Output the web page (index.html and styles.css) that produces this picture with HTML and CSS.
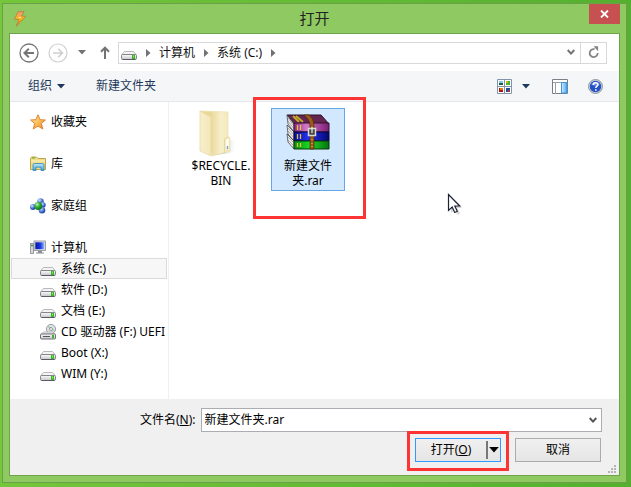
FILE: index.html
```html
<!DOCTYPE html>
<html lang="zh-CN">
<head>
<meta charset="utf-8">
<title>打开</title>
<link rel="stylesheet" href="styles.css">
</head>
<body>
<svg class="defs" aria-hidden="true">
  <defs>
    <linearGradient id="metal" x1="0" y1="0" x2="0" y2="1"><stop offset="0" stop-color="#fdfdfd"/><stop offset="1" stop-color="#c3c4c8"/></linearGradient>
    <linearGradient id="gold" x1="0" y1="0" x2="1" y2="1"><stop offset="0" stop-color="#fff3a0"/><stop offset="1" stop-color="#f08a1c"/></linearGradient>
    <linearGradient id="bolt" x1="0" y1="0" x2="0" y2="1"><stop offset="0" stop-color="#f39a7c"/><stop offset=".5" stop-color="#f6b51e"/><stop offset="1" stop-color="#ee8a12"/></linearGradient>
    <linearGradient id="screen" x1="0" y1="0" x2="1" y2="0"><stop offset="0" stop-color="#0a14a8"/><stop offset=".55" stop-color="#1a35dd"/><stop offset="1" stop-color="#8fb7ff"/></linearGradient>
    <linearGradient id="sky" x1="0" y1="0" x2="0" y2="1"><stop offset="0" stop-color="#bfe9fb"/><stop offset="1" stop-color="#3b9ed8"/></linearGradient>
    <linearGradient id="pane" x1="0" y1="0" x2="1" y2="0"><stop offset="0" stop-color="#d2ecff"/><stop offset="1" stop-color="#4aa6f3"/></linearGradient>
    <linearGradient id="flapA" x1="0" y1="0" x2="1" y2="0"><stop offset="0" stop-color="#f8efcb"/><stop offset="1" stop-color="#f3e6b8"/></linearGradient>
    <linearGradient id="flapB" x1="0" y1="0" x2="1" y2="0"><stop offset=".35" stop-color="#e9d798"/><stop offset=".7" stop-color="#f8efcb"/><stop offset="1" stop-color="#f3e6b8"/></linearGradient>
    <linearGradient id="shade" x1="0" y1="0" x2="1" y2="0"><stop offset=".3" stop-color="#aaa"/><stop offset="1" stop-color="#fff" stop-opacity="0"/></linearGradient>
    <linearGradient id="purple" x1="0" y1="0" x2="1" y2="0"><stop offset="0" stop-color="#8b2382"/><stop offset=".35" stop-color="#d27ac8"/><stop offset="1" stop-color="#7c1c74"/></linearGradient>
    <linearGradient id="blue" x1="0" y1="0" x2="1" y2="0"><stop offset="0" stop-color="#0a0a96"/><stop offset=".4" stop-color="#2433f2"/><stop offset="1" stop-color="#060670"/></linearGradient>
    <linearGradient id="green" x1="0" y1="0" x2="1" y2="0"><stop offset="0" stop-color="#0a8a14"/><stop offset=".45" stop-color="#17dd22"/><stop offset="1" stop-color="#077010"/></linearGradient>
    <radialGradient id="ball" cx=".35" cy=".3" r=".7"><stop offset="0" stop-color="#d7e6ff"/><stop offset=".5" stop-color="#5b84dc"/><stop offset="1" stop-color="#1e3fa4"/></radialGradient>
    <radialGradient id="ballGreen" cx=".35" cy=".3" r=".7"><stop offset="0" stop-color="#c2f3b4"/><stop offset=".5" stop-color="#2fae33"/><stop offset="1" stop-color="#0c7419"/></radialGradient>
  </defs>
  <symbol id="drive" viewBox="0 0 16 16">
    <path d="M3.500 6.500h9l2.600 3H.9z" fill="#f4f4f5" stroke="#a6a8ac" stroke-width=".8"/>
    <rect x=".5" y="9.500" width="15" height="5" rx="1.200" fill="url(#metal)" stroke="#84868c"/>
    <path d="M1.500 14.500h13" stroke="#5d5965"/>
    <rect x="11" y="10" width="3" height="4" fill="#36b526"/><rect x="12" y="10.500" width="1" height="2" fill="#8bea5b"/>
  </symbol>
  <symbol id="cd-drive" viewBox="0 0 16 16">
    <circle cx="11" cy="5" r="4.600" fill="#dfe2e5" stroke="#858a90" stroke-width=".8"/>
    <path d="M11 5 8 2.200M11 5l3.500 1.800" stroke="#9fcdb0" stroke-width="1.400"/><circle cx="11" cy="5" r="1.500" fill="#fff" stroke="#777" stroke-width=".7"/>
    <path d="M3.500 8h9l2.600 2H.9z" fill="#eee" stroke="#a6a8ac" stroke-width=".7"/>
    <rect x=".5" y="10" width="15" height="5" rx="1" fill="url(#metal)" stroke="#6f7177"/>
    <path d="M3 12.500h7" stroke="#555"/><rect x="12" y="11" width="2" height="3" fill="#36b526"/>
  </symbol>
  <symbol id="tri-right" viewBox="0 0 5 8"><path d="M0 0 4.500 4 0 8z" fill="currentColor"/></symbol>
  <symbol id="tri-down" viewBox="0 0 8 5"><path d="M0 0h8L4 4.500z" fill="currentColor"/></symbol>
  <symbol id="chevron" viewBox="0 0 8 7"><path d="M.7 1 4 4.600 7.300 1" fill="none" stroke="currentColor" stroke-width="2"/></symbol>
</svg>

<main class="dialog" aria-labelledby="title">
  <header class="titlebar">
    <svg class="app-icon" viewBox="0 0 14 16"><path d="M5 .8 11 .5 8.500 5l4.300.4L3.200 15.200 6 8.600 1.400 8.200z" fill="url(#bolt)" stroke="#b7743a" stroke-width=".7"/><path d="M5.500 6.700 8 6.300" stroke="#fff0a0"/></svg>
    <h1 id="title">打开</h1>
    <button class="close" aria-label="关闭"><svg width="9" height="8" viewBox="0 0 9 8"><path d="M1 .5 8 7.500M8 .5 1 7.500" stroke="#fff" stroke-width="1.800"/></svg></button>
  </header>

  <div class="client">
    <nav class="navrow">
      <button class="round" aria-label="后退"><svg width="20" height="20" viewBox="0 0 20 20" fill="none" stroke="#757575"><circle cx="10" cy="10" r="9" stroke-width="1.300"/><path d="M15 10H6M9.800 5.700 5.500 10l4.300 4.300" stroke-width="2"/></svg></button>
      <button class="round" aria-label="前进"><svg width="20" height="20" viewBox="0 0 20 20" fill="none" stroke="#cfcfcf"><circle cx="10" cy="10" r="9" stroke-width="1.200"/><path d="M5 10h9M10.200 5.700l4.300 4.300-4.300 4.300" stroke-width="1.600"/></svg></button>
      <button class="history" aria-label="最近位置"><svg width="8" height="5"><use href="#tri-down"/></svg></button>
      <button class="up" aria-label="上移"><svg width="10" height="13" viewBox="0 0 10 13" fill="none" stroke="#737373" stroke-width="2"><path d="M5 13V2M1 5.700l4-4 4 4"/></svg></button>
      <div class="address">
        <svg class="icon"><use href="#drive"/></svg>
        <svg class="sep" width="5" height="8"><use href="#tri-right"/></svg>
        <a href="#">计算机</a>
        <svg class="sep" width="5" height="8"><use href="#tri-right"/></svg>
        <a href="#">系统 (C:)</a>
        <svg class="sep" width="5" height="8"><use href="#tri-right"/></svg>
        <button class="drop" aria-label="以前的位置"><svg width="8" height="7"><use href="#chevron"/></svg></button>
        <button class="refresh" aria-label="刷新"><svg width="12" height="13" viewBox="0 0 12 13"><path d="M6.600 3.200A4 4 0 1 0 9.700 7" fill="none" stroke="#858585" stroke-width="1.800"/><path d="M5.500.3h4.600v5z" fill="#858585"/></svg></button>
      </div>
    </nav>

    <div class="toolbar">
      <button class="organize">组织 <svg width="8" height="5"><use href="#tri-down"/></svg></button>
      <button class="new-folder">新建文件夹</button>
      <button class="views" aria-label="更改视图">
        <svg width="15" height="15" viewBox="0 0 15 15"><path d="M.5.5h14v14H.5zM7.500 1v13M1 7.500h13" fill="#fff" stroke="#8494a8"/><path d="M2 2h4v2H2z" fill="#88c8e6"/><path d="M2 4h4v2H2z" fill="#176049"/><path d="M9 2h4v4H9z" fill="#48b52e"/><path d="M9 2h2v2H9z" fill="#d2b51e"/><path d="M2 9h4v4H2z" fill="#a41b14"/><path d="M3 9h3v2H3z" fill="#e67d16"/><path d="M9 9h4v4H9z" fill="#234a92"/><path d="M11 11h2v2h-2z" fill="#a63c3c"/></svg>
      </button>
      <button class="views-more" aria-label="更多视图"><svg width="8" height="5"><use href="#tri-down"/></svg></button>
      <button class="preview" aria-label="显示预览窗格"><svg width="16" height="15" viewBox="0 0 16 15"><path d="M.5.5h15v14H.5z" fill="#fff" stroke="#777f88"/><path d="M1 3.500h14M3.500 3.500V15" stroke="#9aa0a6"/><path d="M9.500 3.500h5.500v10.500H9.500z" fill="url(#pane)" stroke="#3f94dc"/></svg></button>
      <button class="help" aria-label="获取帮助"><svg width="15" height="15" viewBox="0 0 15 15"><circle cx="7.500" cy="7.500" r="7" fill="#ccd0d8" stroke="#7e838d" stroke-width=".8"/><circle cx="7.500" cy="7.500" r="5.700" fill="#2451c4"/><path d="M3 5.500a5 5 0 0 1 9 0Q7.500 8 3 5.500z" fill="#648ce8"/><path d="M5.300 6c0-3 4.600-2.900 4.600-.4 0 1.600-2.100 1.500-2.100 3.300M7.800 10.200v1.600" fill="none" stroke="#fff" stroke-width="1.600"/></svg></button>
    </div>

    <div class="body">
      <aside class="tree">
        <a href="#" class="node root"><svg class="icon" viewBox="0 0 16 16"><path d="m8 .8 2.100 4.900 5.300.3-4.100 3.500 1.500 5.500L8 12.100 3.200 15l1.500-5.500L.6 6l5.300-.3z" fill="url(#gold)" stroke="#dc8330"/></svg>收藏夹</a>
        <a href="#" class="node root"><svg class="icon" viewBox="0 0 16 16"><path d="M.5 2.500 1.500 1h5L8 2.500h7.500v11H.5z" fill="#f0dc89" stroke="#c0a44c"/><path d="M2 2h3" stroke="#55a92f"/><path d="M1 5h14" stroke="#fff6c5"/><path d="M3 14.500V9q0-1.500 1.500-1.500h8Q14 7.500 14 9v5.500h-3v-3.300H6v3.300z" fill="url(#sky)" stroke="#3085b9" stroke-width=".8"/></svg>库</a>
        <a href="#" class="node root"><svg class="icon" viewBox="0 0 16 16"><circle cx="10.500" cy="3.500" r="3.200" fill="url(#ball)"/><circle cx="2.900" cy="9" r="2.900" fill="url(#ball)"/><circle cx="13" cy="7" r="2.700" fill="url(#ball)"/><circle cx="12" cy="12.300" r="3.300" fill="url(#ball)"/><circle cx="8.300" cy="8" r="3.900" fill="url(#ballGreen)"/></svg>家庭组</a>
        <a href="#" class="node root"><svg class="icon" viewBox="0 0 16 16"><rect x=".5" y="3.500" width="3" height="10" fill="#d5d7da" stroke="#85888f" stroke-width=".8"/><path d="M1 5.500h2" stroke="#2ea61d" stroke-width="1.500"/><rect x="4" y="1" width="11.500" height="9.500" fill="#e0e2e7" stroke="#888b93" stroke-width=".8"/><rect x="5.300" y="2.300" width="9" height="6.900" fill="url(#screen)"/><path d="M8 11h4v1.500h2v1H6v-1h2z" fill="#8a8d94"/></svg>计算机</a>
        <a href="#" class="node child selected"><svg class="icon"><use href="#drive"/></svg>系统 (C:)</a>
        <a href="#" class="node child"><svg class="icon"><use href="#drive"/></svg>软件 (D:)</a>
        <a href="#" class="node child"><svg class="icon"><use href="#drive"/></svg>文档 (E:)</a>
        <a href="#" class="node child"><svg class="icon"><use href="#cd-drive"/></svg>CD 驱动器 (F:) UEFI</a>
        <a href="#" class="node child"><svg class="icon"><use href="#drive"/></svg>Boot (X:)</a>
        <a href="#" class="node child"><svg class="icon"><use href="#drive"/></svg>WIM (Y:)</a>
      </aside>

      <section class="files">
        <button class="file">
          <svg class="thumb" viewBox="0 0 48 48"><path d="M18 46 34 31q7 2 7 9l-8 4z" fill="url(#shade)" opacity=".7"/><path d="M3 2 31 3v24l2 2v13l-18 5z" fill="url(#flapB)" stroke="#ecdfae" stroke-width=".7"/><path d="M3 2 14 8v39L3 42z" fill="url(#flapA)" stroke="#e6d8a2" stroke-width=".7"/><path d="M27.500 44V30l3.500-2" fill="none" stroke="#e2d093" stroke-width=".8"/><path d="M30.500 30v10" stroke="#fff" stroke-width="2.500"/><path d="M30.500 37v3" stroke="#6faad6" stroke-width="1.500"/></svg>
          <span>$RECYCLE.<br>BIN</span>
        </button>
        <button class="file chosen">
          <svg class="thumb" viewBox="0 0 48 48">
            <path d="M3 6h34l8 9H10z" fill="#642551" stroke="#2b1024"/><path d="m9 7 6 6M12 7l7 6" stroke="#c2a827" stroke-width="2"/>
            <path d="m3 6 7 9v8L4 15zM3 16l7 7v9l-6-7zM3 25l7 7v8l-6-7z" fill="#eee" stroke="#333" stroke-width=".7"/><path d="m4 9 6 8M4 12l6 8M4 19l6 7M4 22l6 7M4 28l6 6M4 31l6 6" stroke="#888" stroke-width=".7"/>
            <path d="M10 14h35v9H10z" fill="url(#purple)" stroke="#35102f"/><path d="M10 23h35v9H10z" fill="url(#blue)" stroke="#06063b"/><path d="M10 32h35v8H10z" fill="url(#green)" stroke="#053a0a"/>
            <path d="M13.500 16v5M16.500 16v5M13.500 25v5M16.500 25v5M13.500 34v4M16.500 34v4" stroke="#d9c63c" stroke-width="1.300"/>
            <path d="M20 6h5q5 4 5 10v24h-4V16q0-5-6-10z" fill="#9b5a1c" stroke="#4d2807" stroke-width=".7"/><rect x="24.500" y="19.500" width="7" height="7" fill="#474747" stroke="#d9d9d0" stroke-width="1.500"/><path d="M28 18v6" stroke="#f4f4e8" stroke-width="1.200"/><path d="M28 30v1M28 34v1M28 37v1" stroke="#f0ce64"/>
          </svg>
          <span>新建文件<br>夹.rar</span>
          <i class="mark mark-file"></i>
        </button>
        <svg class="pointer" width="18" height="24" viewBox="0 0 18 24"><path d="m4 4 11 11h-5l3 5-2 2-4-5-3 3z" fill="#bbb" opacity=".6"/><path d="M1.500 1.500v16l3.700-3.400 2.500 5.400 2.600-1.200-2.500-5.300h5z" fill="#fff" stroke="#1d2334" stroke-width="1.200"/></svg>
      </section>
    </div>

    <form class="footer">
      <div class="name-row">
        <label for="filename">文件名(<u>N</u>):</label>
        <div class="combo">
          <input id="filename" type="text" value="新建文件夹.rar">
          <button type="button" class="drop" aria-label="文件名列表"><svg width="8" height="7"><use href="#chevron"/></svg></button>
        </div>
      </div>
      <div class="actions">
        <div class="split">
          <button type="button" class="open">打开(<u>O</u>)</button>
          <button type="button" class="open-more" aria-label="打开方式"><svg width="10" height="6"><use href="#tri-down"/></svg></button>
          <i class="mark mark-open"></i>
        </div>
        <button type="button" class="cancel">取消</button>
      </div>
      <svg class="grip" width="8" height="8" viewBox="0 0 8 8" fill="#b5b5b5"><path d="M6 0h2v2H6zM3 3h2v2H3zM6 3h2v2H6zM0 6h2v2H0zM3 6h2v2H3zM6 6h2v2H6z"/></svg>
    </form>
  </div>
</main>
</body>
</html>
```

FILE: styles.css
```css
* { box-sizing: border-box; }

body {
  margin: 0;
  min-height: 100vh;
  display: flex;
  padding: 3px 4px 4px 2px;
  background: linear-gradient(90deg, #74c63a, #55b030);
  font: 12px/16px "Noto Sans", "Noto Sans CJK SC", sans-serif;
  color: #000;
}

button {
  display: flex;
  align-items: center;
  justify-content: center;
  margin: 0;
  padding: 0;
  border: 0;
  background: none;
  font: inherit;
  color: inherit;
}

a { color: inherit; text-decoration: none; }
svg { display: block; flex: none; }
.defs { position: absolute; width: 0; height: 0; }
.icon { width: 16px; height: 16px; }

.dialog {
  flex: 1;
  min-width: 0;
  display: flex;
  flex-direction: column;
  padding: 0 6px 6px;
  border: 1px solid #6b9f48;
  background: #8fc962;
}

.titlebar {
  display: grid;
  grid-template-columns: 31px 1fr 31px;
  height: 29px;
}
.app-icon { width: 14px; height: 16px; margin: 7px 0 0 4px; }
.titlebar h1 {
  margin: 0;
  text-align: center;
  font-size: 15px;
  line-height: 29px;
  font-weight: 400;
  color: #222;
}
.close { height: 20px; background: #c75050; }

.client {
  flex: 1;
  display: flex;
  flex-direction: column;
  border: 1px solid #6ea34a;
  background: #fff;
}

.navrow {
  display: flex;
  align-items: center;
  height: 37px;
  padding: 0 12px 0 9px;
  color: #727272;
}
.round { width: 20px; margin-right: 9px; }
.history { width: 8px; margin-left: 1px; }
.up { width: 10px; margin: 0 8px 0 14px; }
.address {
  flex: 1;
  display: flex;
  align-items: center;
  height: 22px;
  padding-left: 2px;
  border: 1px solid #d9d9d9;
}
.address a { color: #111; }
.address .sep { margin: 0 8px 0 9px; }
.address .drop { width: 18px; margin-left: auto; }
.refresh { width: 26px; height: 20px; border-left: 1px solid #d9d9d9; }

.toolbar {
  display: flex;
  align-items: center;
  height: 31px;
  padding: 0 16px 0 18px;
  border-bottom: 1px solid #e5e7ea;
  background: #f4f6f8;
  color: #1e395b;
}
.organize { gap: 5px; }
.new-folder { margin-left: 31px; }
.views { margin-left: auto; }
.views-more { margin-left: 10px; }
.preview { margin-left: 22px; }
.help { margin-left: 20px; }

.body { flex: 1; display: flex; min-height: 0; }
.tree {
  width: 159px;
  padding: 9px 1px 0;
  overflow: hidden;
  border-right: 1px solid #f0f0f0;
}
.node {
  display: flex;
  align-items: center;
  gap: 5px;
  height: 21px;
  border: 1px solid transparent;
  white-space: nowrap;
  overflow: hidden;
}
.root { padding-left: 18px; }
.root + .root { margin-top: 21px; }
.child { padding-left: 28px; }
.selected { border-color: #dadada; background: #f7f7f7; }

.files {
  flex: 1;
  position: relative;
  display: flex;
  align-items: flex-start;
  gap: 13px;
  padding: 6px 15px;
}
.file {
  position: relative;
  flex-direction: column;
  justify-content: flex-start;
  gap: 1px;
  width: 74px;
  height: 83px;
  border: 1px solid transparent;
  line-height: 15px;
}
.thumb { width: 48px; height: 48px; }
.chosen { border-color: #66a7e8; background: #d1e8ff; }
.pointer { position: absolute; left: 278px; top: 91px; }

.mark { position: absolute; border: 3px solid #fc3434; pointer-events: none; }
.mark-file { inset: -12px -22px -29px -19px; }
.mark-open { inset: -8px -9px -10px; }

.footer {
  position: relative;
  height: 76px;
  padding: 9px 17px 0 130px;
  background: #f0f0f0;
}
.name-row { display: flex; align-items: center; gap: 5px; }
.combo {
  flex: 1;
  display: flex;
  height: 24px;
  border: 1px solid #abadb3;
  background: #fff;
}
.combo input {
  flex: 1;
  min-width: 0;
  padding: 0 3px;
  border: 0;
  outline: 0;
  background: none;
  font: inherit;
  color: inherit;
}
.combo .drop { width: 17px; color: #555; }
.actions {
  display: flex;
  justify-content: flex-end;
  gap: 14px;
  margin-top: 6px;
  padding-right: 1px;
}
.split {
  position: relative;
  display: flex;
  width: 86px;
  height: 24px;
  border: 1px solid #3399ff;
  background: linear-gradient(#f0f0f0, #e5e5e5);
}
.open { flex: 1; }
.open-more { width: 14px; height: 18px; margin-top: 2px; border-left: 2px solid #777; }
.cancel { width: 86px; height: 24px; border: 1px solid #acacac; background: linear-gradient(#f0f0f0, #e5e5e5); }
.grip { position: absolute; right: 3px; bottom: 2px; }
```
